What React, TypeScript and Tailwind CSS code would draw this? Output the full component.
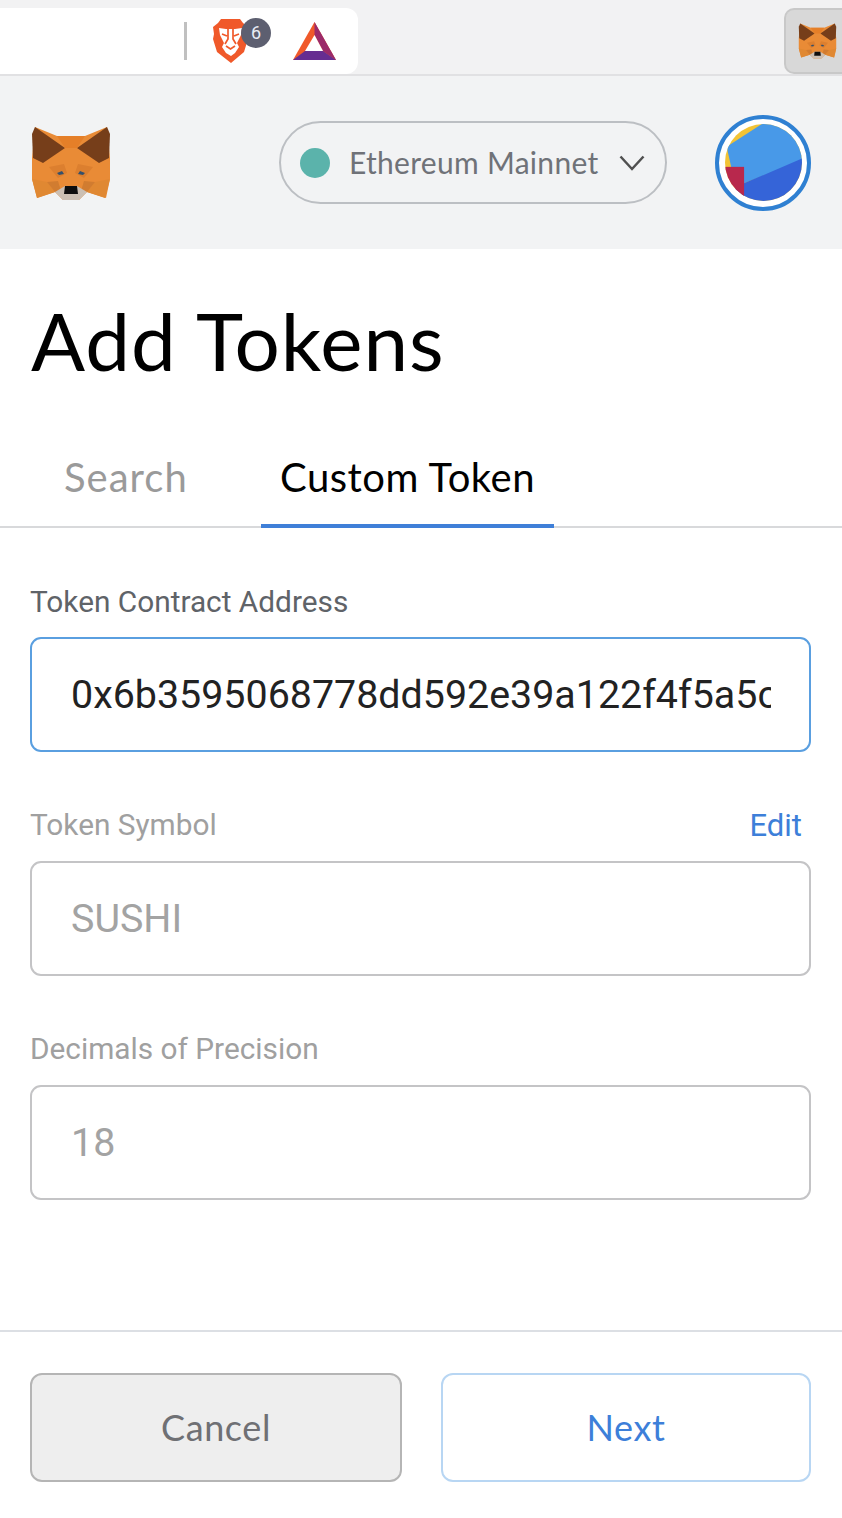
const FoxLogo = ({ className }: { className: string }) => (
  <svg viewBox="0 0 80 75" className={className}>
    <polygon points="4,1 26,10 54,10 76,1 79,32 79,53 75,72 56,66 48,74 32,74 24,66 6,72 1,53 1,32" fill="#e98b36" />
    <polygon points="4,1 34,22 12,37 2,32 1,8" fill="#763e1a" />
    <polygon points="76,1 46,22 68,37 78,32 79,8" fill="#763e1a" />
    <polygon points="26,10 54,10 46,22 34,22" fill="#e57f28" />
    <polygon points="18,41 33,38 36,47 27,52" fill="#dc7f2f" />
    <polygon points="62,41 47,38 44,47 53,52" fill="#dc7f2f" />
    <polygon points="1,53 16,56 24,66 6,72" fill="#e08832" />
    <polygon points="79,53 64,56 56,66 74,72" fill="#e08832" />
    <polygon points="16,56 27,55 30,65 24,66" fill="#d17c30" />
    <polygon points="64,56 53,55 50,65 56,66" fill="#d17c30" />
    <polygon points="24,66 34,60 46,60 56,66 48,74 32,74" fill="#cbbfb3" />
    <polygon points="34,60 46,60 47,68 33,68" fill="#0e0e0e" />
    <polygon points="26,47 31,45 33,48 28,49" fill="#34506c" />
    <polygon points="54,47 49,45 47,48 52,49" fill="#34506c" />
  </svg>
);

const BraveLogo = () => (
  <svg viewBox="0 0 35 44" className="w-[35px] h-[44px]">
    <polygon points="8,0 27,0 30,4 35,8 34,15 35,20 31,33 18,44 4,33 0,20 1,15 0,8 5,4" fill="#f0592a" />
    <polygon points="6,9 13,10 22,10 29,9 28,16 24,24 26,28 22,34 18,37 13,34 9,28 11,24 7,16" fill="#ffffff" />
    <path d="M9 15 L14 17 M26 15 L21 17 M15 10 L15 20 L12 25 M20 10 L20 20 L23 25 M13 27 L17.5 30 L22 27" fill="none" stroke="#f0592a" strokeWidth="1.7" />
  </svg>
);

const BatLogo = () => (
  <svg viewBox="0 0 43 38" className="w-[43px] h-[38px]">
    <polygon points="21.5,0 43,38 0,38" fill="#f0592a" />
    <polygon points="21.5,0 43,38 30,29 21.5,13" fill="#9b2a6a" />
    <polygon points="0,38 12,29 30,29 43,38" fill="#662d91" />
    <polygon points="21.5,13 30,29 12,29" fill="#ffffff" />
  </svg>
);

const Avatar = () => (
  <div className="w-24 h-24 rounded-full border-[4px] border-[#2f80d2] bg-white flex items-center justify-center">
    <svg viewBox="0 0 230 230" className="w-[77px] h-[77px] rounded-full">
      <rect width="230" height="230" fill="#f2c335" />
      <polygon points="110,0 230,0 230,110 55,178 20,135 5,68" fill="#4899e8" />
      <polygon points="230,103 230,230 0,230 0,213 55,178" fill="#3564d8" />
      <rect x="0" y="128" width="57" height="102" fill="#b8284d" />
    </svg>
  </div>
);

const Field = ({
  label,
  value,
  active,
  edit,
}: {
  label: string;
  value: string;
  active?: boolean;
  edit?: boolean;
}) => (
  <div>
    <div className="flex justify-between items-center h-[36px] pr-[9px]">
      <span className={`text-[29.8px] leading-none ${active ? "text-[#5f6368]" : "text-[#a0a0a0] mt-[-2px]"}`}>
        {label}
      </span>
      {edit && <span className="text-[31px] leading-none text-[#3d7fd9] mt-[-2px]">Edit</span>}
    </div>
    <input
      readOnly
      value={value}
      className={`mt-[17px] block w-full h-[115px] rounded-[11px] border-2 pl-[39px] pr-[38px] text-[39.4px] outline-none bg-transparent ${
        active ? "border-[#5a9fe0] text-[#222222]" : "border-[#c4c4c6] text-[#a3a3a3]"
      }`}
    />
  </div>
);

export default function App() {
  return (
    <div className="w-[842px] h-[1518px] bg-white overflow-hidden font-['Roboto',sans-serif]">
      <div className="h-[76px] bg-[#f2f2f3] border-b-2 border-[#e1e1e3] flex justify-between items-end">
        <div className="w-[358px] h-[66px] bg-white rounded-r-[12px] flex items-center">
          <div className="ml-[184px] w-[3px] h-[38px] bg-[#c0c0c0]" />
          <div className="relative ml-[26px] mt-[-1px]">
            <BraveLogo />
            <span className="absolute left-[28px] top-[-1px] w-[30px] h-[30px] rounded-full bg-[#5d5f70] text-[#e8ecf4] text-[18px] flex items-center justify-center">
              6
            </span>
          </div>
          <div className="ml-[45px] mt-[-1px]">
            <BatLogo />
          </div>
        </div>
        <div className="w-[58px] h-[66px] bg-[#d8d8d8] border-2 border-r-0 border-[#c8c8c8] rounded-l-[10px] flex items-center pl-[12px]">
          <FoxLogo className="w-[39px] h-[36px]" />
        </div>
      </div>

      <div className="h-[173px] bg-[#f2f3f4] pl-[31px] pr-[31px] flex items-center">
        <FoxLogo className="w-[80px] h-[75px] mt-[1px]" />
        <div className="ml-[168px] w-[388px] h-[83px] rounded-full border-2 border-[#bcbfc3] flex items-center pl-[19px] font-['Lato',sans-serif]">
          <span className="w-[30px] h-[30px] rounded-full bg-[#5bb3ab]" />
          <span className="ml-[19px] text-[30px] text-[#6f7278] tracking-[0.3px] whitespace-nowrap">Ethereum Mainnet</span>
          <svg viewBox="0 0 26 16" className="w-[26px] h-[16px] ml-[20px]" fill="none" stroke="#505050" strokeWidth="2.5">
            <path d="M1.5 1.5 L13 14 L24.5 1.5" />
          </svg>
        </div>
        <div className="ml-auto">
          <Avatar />
        </div>
      </div>

      <h1 className="pl-[31px] mt-[45px] text-[80px] leading-[92px] tracking-[1px] text-black font-['Lato',sans-serif]">Add Tokens</h1>

      <div className="mt-[45px] border-b-2 border-[#d8d9db] h-[97px] flex items-stretch font-['Lato',sans-serif] text-[40px] tracking-[0.5px]">
        <div className="ml-[64px] w-[197px] pt-[16px] text-[#9a9a9a] tracking-[1px]">Search</div>
        <div className="w-[293px] h-[97px] border-b-[4px] border-[#3f7fd8] text-center pt-[16px] text-black">Custom Token</div>
      </div>

      <div className="px-[30px] pr-[31px] mt-[56px] flex flex-col gap-[56px]">
        <Field label="Token Contract Address" value="0x6b3595068778dd592e39a122f4f5a5cf09c90fe2" active />
        <Field label="Token Symbol" value="SUSHI" edit />
        <Field label="Decimals of Precision" value="18" />
      </div>

      <div className="mt-[130px] border-t-2 border-[#dcdfe4] pt-[41px] px-[30px] pr-[31px] flex gap-[39px] font-['Lato',sans-serif] text-[36px] tracking-[0.6px]">
        <button className="w-[372px] h-[109px] pb-[2px] rounded-[12px] bg-[#eeeeee] border-2 border-[#b5b5b5] text-[#6f7074]">Cancel</button>
        <button className="w-[370px] h-[109px] pb-[2px] rounded-[12px] bg-white border-2 border-[#b8d6f3] text-[#3d7fd9]">Next</button>
      </div>
    </div>
  );
}
